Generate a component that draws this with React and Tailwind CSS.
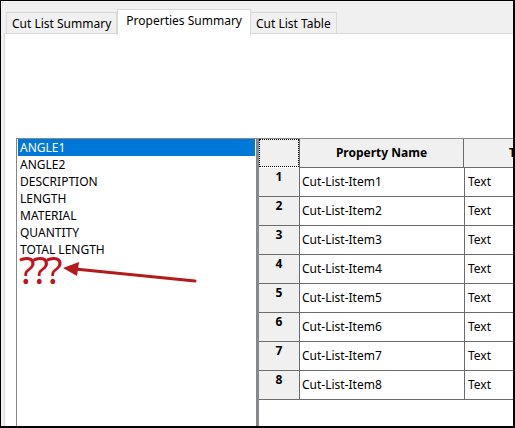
import React from "react";

const font = { fontFamily: '"Noto Sans", "Open Sans", sans-serif' };

const listItems = ["ANGLE1", "ANGLE2", "DESCRIPTION", "LENGTH", "MATERIAL", "QUANTITY", "TOTAL LENGTH"];

export default function App() {
  const rows = [1, 2, 3, 4, 5, 6, 7, 8];
  return (
    <div
      className="w-[515px] h-[428px] border-l border-t border-r-2 border-b-2 border-black bg-[#f0f0f0] flex flex-col overflow-hidden text-black"
      style={font}
    >
      {/* tab strip */}
      <div className="h-[32px] flex items-end pl-[5px] shrink-0 relative z-10">
        <div className="h-[21px] px-[5px] flex items-center pt-[1px] border border-b-0 border-[#d9d9d9] bg-[#f0f0f0] text-[12px] leading-none">
          Cut List Summary
        </div>
        <div className="h-[26px] -mb-[2px] px-[8px] flex items-start pt-[5px] border border-b-0 border-[#d9d9d9] bg-white text-[12px] leading-none">
          Properties Summary
        </div>
        <div className="h-[21px] px-[5px] flex items-center pt-[1px] border border-b-0 border-l-0 border-[#d9d9d9] bg-[#f0f0f0] text-[12px] leading-none">
          Cut List Table
        </div>
      </div>
      {/* panel */}
      <div className="flex-1 ml-[3px] bg-white border-l border-t border-[#d9d9d9] min-h-0 overflow-hidden">
        <div className="mt-[104px] ml-[11px] flex items-start">
          {/* list box */}
          <div className="relative w-[241px] h-[300px] shrink-0 border border-[#828790] px-[1px] text-[12px]">
            {listItems.map((t, i) => (
              <div
                key={t}
                className={
                  "h-[17px] pl-[2px] flex items-center leading-none " +
                  (i === 0 ? "bg-[#0078d7] text-white" : "")
                }
              >
                {t}
              </div>
            ))}
            <div className="absolute left-[2px] top-[119px] text-[38px] leading-[0.6] text-[#c1121f] tracking-[-3px]">
              ???
            </div>
            <svg className="absolute left-0 top-0" width="241" height="160" viewBox="0 0 241 160">
              <line x1="178" y1="142" x2="58" y2="130" stroke="#b41c1c" strokeWidth="3" strokeLinecap="round" />
              <polygon points="46,129 62,123 60,137" fill="#b41c1c" />
            </svg>
          </div>
          {/* table */}
          <div className="shrink-0 border-l-2 border-t border-[#8a8a8a] text-[12px]">
            <div className="flex h-[29px]">
              <div className="w-[40px] h-[28px] bg-[#f0f0f0] border border-dotted border-black"></div>
              <div className="w-[165px] bg-[#f0f0f0] border-l border-b border-r border-[#6b6b6b] flex items-center justify-center font-bold">
                Property Name
              </div>
              <div className="w-[100px] bg-[#f0f0f0] border-b border-[#6b6b6b] flex items-center pl-[45px] font-bold">
                Type
              </div>
            </div>
            {rows.map((n) => (
              <div key={n} className="flex h-[29px]">
                <div className="w-[41px] bg-[#f0f0f0] border-r border-b border-[#6b6b6b] flex justify-center pt-[3px] font-bold leading-none">
                  {n}
                </div>
                <div className="w-[165px] border-r border-b border-[#6b6b6b] flex items-center pl-[2px]">
                  Cut-List-Item{n}
                </div>
                <div className="w-[100px] border-b border-[#6b6b6b] flex items-center pl-[3px]">
                  Text
                </div>
              </div>
            ))}
            <div className="h-[40px]"></div>
          </div>
        </div>
      </div>
    </div>
  );
}
